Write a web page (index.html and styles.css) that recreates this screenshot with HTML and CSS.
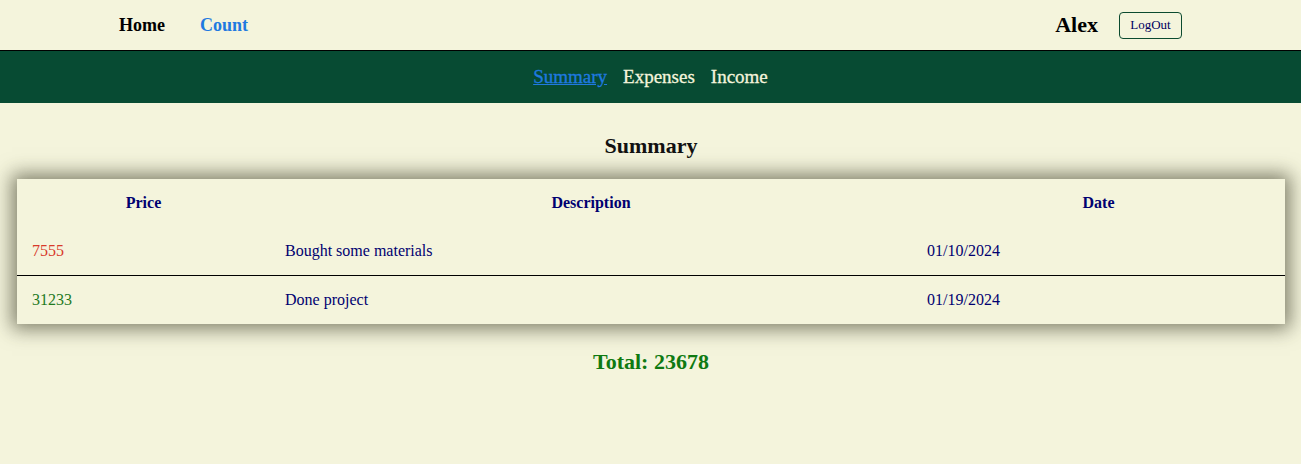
FILE: index.html
```html
<!DOCTYPE html>
<html>
<head>
<meta charset="utf-8">
<link rel="stylesheet" href="styles.css">
</head>
<body>
<header class="topbar">
  <nav class="main-nav">
    <a class="main-link" href="#">Home</a>
    <a class="main-link active" href="#">Count</a>
  </nav>
  <div class="user">
    <span class="user-name">Alex</span>
    <button class="logout">LogOut</button>
  </div>
</header>
<nav class="subbar">
  <a class="sub-link active" href="#">Summary</a>
  <a class="sub-link" href="#">Expenses</a>
  <a class="sub-link" href="#">Income</a>
</nav>
<main class="content">
  <h2 class="title">Summary</h2>
  <div class="card">
    <table class="grid">
      <colgroup>
        <col class="c-price">
        <col class="c-desc">
        <col class="c-date">
      </colgroup>
      <thead>
        <tr><th>Price</th><th>Description</th><th>Date</th></tr>
      </thead>
      <tbody>
        <tr class="sep"><td class="neg">7555</td><td>Bought some materials</td><td>01/10/2024</td></tr>
        <tr><td class="pos">31233</td><td>Done project</td><td>01/19/2024</td></tr>
      </tbody>
    </table>
  </div>
  <div class="total">Total: 23678</div>
</main>
</body>
</html>
```

FILE: styles.css
```css
html, body {
  margin: 0;
  background: #f4f4dc;
  font-family: "Liberation Serif", "Times New Roman", serif;
}
.topbar {
  height: 50px;
  display: flex;
  align-items: center;
  justify-content: space-between;
  padding: 0 119px;
}
.main-nav {
  display: flex;
  gap: 35px;
}
.main-link {
  font-size: 18px;
  font-weight: bold;
  color: #000;
  text-decoration: none;
}
.main-link.active {
  color: #1f7ae0;
}
.user {
  display: flex;
  align-items: center;
  gap: 21px;
}
.user-name {
  font-size: 22px;
  font-weight: bold;
  color: #000;
}
.logout {
  font-family: "Liberation Serif", "Times New Roman", serif;
  font-size: 13px;
  color: #000060;
  background: transparent;
  border: 1px solid #0b4a2f;
  border-radius: 4px;
  height: 27px;
  width: 63px;
  padding: 0;
}
.subbar {
  height: 52px;
  border-top: 1px solid #000;
  background: #074b33;
  display: flex;
  align-items: center;
  justify-content: center;
  gap: 16px;
}
.sub-link {
  font-size: 19px;
  font-weight: normal;
  color: #f4f4dc;
  text-decoration: none;
  -webkit-text-stroke: 0.3px #f4f4dc;
}
.sub-link.active {
  color: #1f7ae0;
  -webkit-text-stroke: 0.3px #1f7ae0;
  text-decoration: underline;
}
.content {
  padding: 30px 16px 0 17px;
}
.title {
  margin: 0 0 21px;
  text-align: center;
  font-size: 22px;
  line-height: 25px;
  color: #111;
}
.card {
  background: #f4f4dc;
  box-shadow: 0 0 18px 5px rgba(50, 50, 30, 0.6);
}
.grid {
  width: 100%;
  table-layout: fixed;
  border-collapse: collapse;
  color: #000070;
  font-size: 16px;
}
.c-price { width: 253px; }
.c-desc { width: 642px; }
.grid th {
  height: 48px;
  font-weight: bold;
  text-align: center;
  padding: 0;
}
.grid td {
  height: 48px;
  padding: 0 15px;
  text-align: left;
}
.grid tr.sep td {
  border-bottom: 1px solid #000;
}
.neg { color: #d8392a; }
.pos { color: #1f7a1f; }
.total {
  margin-top: 25px;
  text-align: center;
  font-size: 22px;
  font-weight: bold;
  color: #0f7a12;
}
```
